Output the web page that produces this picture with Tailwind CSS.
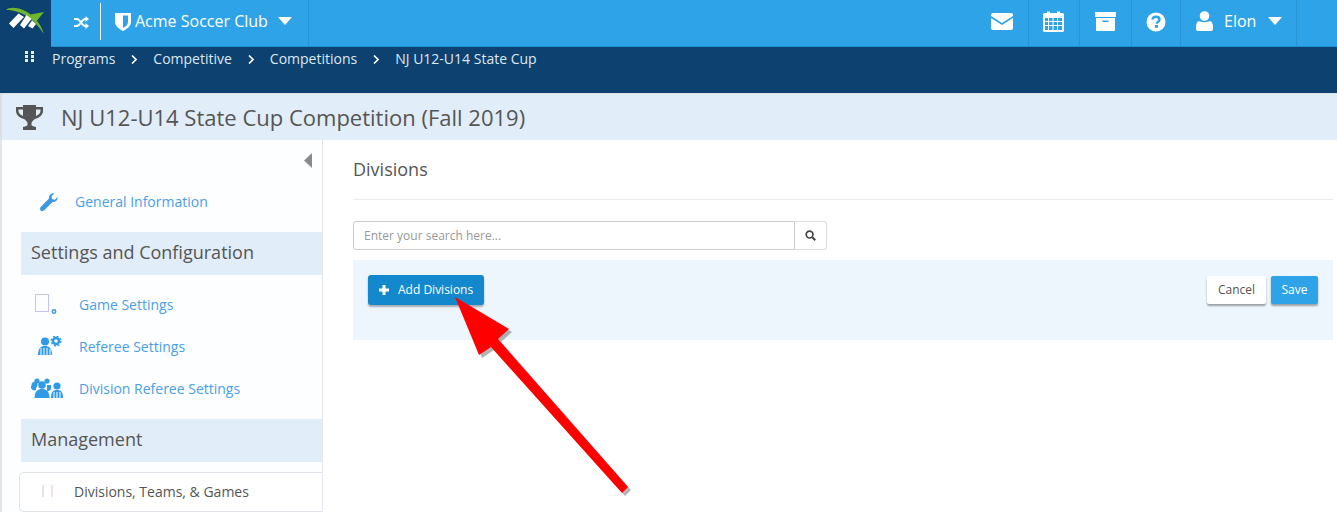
<!DOCTYPE html>
<html>
<head>
<meta charset="utf-8">
<script src="https://cdn.jsdelivr.net/npm/@tailwindcss/browser@4"></script>
</head>
<body class="bg-white overflow-hidden font-['Open_Sans',sans-serif]">
<div class="relative w-[1337px] h-[512px] overflow-hidden bg-white">
  <!-- top bar -->
  <header class="flex h-[47px] bg-[#2ea3e8] border-b border-[#1f8fd3] text-white">
    <div class="w-[51px] h-[47px] bg-[#0d416f] shrink-0">
      <svg width="51" height="47" viewBox="0 0 51 47">
        <path d="M6 10 C9 7 16 7 23 10 C33 14 41 24 44 34 C38 25 30 17 22 13.500 C15 10.500 10 10 6 10Z" fill="#6fb52e"/>
        <path d="M28 15 L44 12 L35 23 L32 18Z" fill="#6fb52e"/>
        <path d="M9 23.500 L18.500 13.500 L24 17 L13.500 28Z M20 25 L26.500 15 L31.500 19 L24 28.500Z M28 26 L32 20.500 L36 24 L32.500 28.500Z" fill="#fff"/>
      </svg>
    </div>
    <div class="w-[49px] flex items-center justify-center shrink-0 pb-[2px] pl-[11px]">
      <svg width="15" height="13" viewBox="0 0 15 13" fill="none" stroke="#fff" stroke-width="2"><path d="M0 3 H3 C6 3 8 10 11 10 H13 M0 10 H3 C6 10 8 3 11 3 H13"/><path d="M11.500 0 L15 3 L11.500 6Z M11.500 7 L15 10 L11.500 13Z" fill="#fff" stroke="none"/></svg>
    </div>
    <div class="w-px h-[37px] mt-[3px] bg-white shrink-0"></div>
    <div class="w-[208px] border-r border-[#2794d6] flex items-center pl-[14px] pb-[4px] shrink-0">
      <svg width="16" height="19" viewBox="0 0 16 19" class="mr-[4px]"><path fill-rule="evenodd" d="M0 1 H16 V10 C16 14 12 17 8 19 C4 17 0 14 0 10Z M8 3.500 V16 C11 14.500 13 12.500 13 10 V3.500Z" fill="#fff"/></svg>
      <span class="text-[16px] leading-none">Acme Soccer Club</span>
      <svg width="14" height="8" viewBox="0 0 14 8" class="ml-[10px]"><path d="M0 0 H14 L7 8Z" fill="#fff"/></svg>
    </div>
    <div class="flex-1"></div>
    <div class="w-[68px] border-r border-[#2794d6] flex items-center justify-center pl-[15px] pb-[3px]">
      <svg width="22" height="17" viewBox="0 0 22 17"><path d="M2 0 H20 A2 2 0 0 1 22 2 V3 L11 10 L0 3 V2 A2 2 0 0 1 2 0Z M0 5 L11 12 L22 5 V15 A2 2 0 0 1 20 17 H2 A2 2 0 0 1 0 15Z" fill="#fff"/></svg>
    </div>
    <div class="w-[51px] border-r border-[#2794d6] flex items-center justify-center pr-[2px] pb-[4px]">
      <svg width="21" height="21" viewBox="0 0 21 21"><path fill-rule="evenodd" d="M1.500 2 H4 V0.500 H7 V2 H14 V0.500 H17 V2 H19.500 A1.500 1.500 0 0 1 21 3.500 V19.500 A1.500 1.500 0 0 1 19.500 21 H1.500 A1.500 1.500 0 0 1 0 19.500 V3.500 A1.500 1.500 0 0 1 1.500 2Z M2 7 V10 H5 V7Z M6 7 V10 H9.500 V7Z M10.500 7 V10 H14 V7Z M15 7 V10 H19 V7Z M2 11 V14 H5 V11Z M6 11 V14 H9.500 V11Z M10.500 11 V14 H14 V11Z M15 11 V14 H19 V11Z M2 15 V19 H5 V15Z M6 15 V19 H9.500 V15Z M10.500 15 V19 H14 V15Z M15 15 V19 H19 V15Z" fill="#fff"/></svg>
    </div>
    <div class="w-[52px] border-r border-[#2794d6] flex items-center justify-center pb-[4px]">
      <svg width="21" height="19" viewBox="0 0 21 19"><path fill-rule="evenodd" d="M0 0 H21 V5 H0Z M1 6 H20 V18 A1 1 0 0 1 19 19 H2 A1 1 0 0 1 1 18Z M7.500 8.500 V10 H13.500 V8.500Z" fill="#fff"/></svg>
    </div>
    <div class="w-[49px] border-r border-[#2794d6] flex items-center justify-center pb-[3px]">
      <svg width="20" height="20" viewBox="0 0 20 20"><circle cx="10" cy="10" r="9.500" fill="#fff"/><path d="M6.500 7.500 C6.700 5.500 8.300 4.700 10 4.700 C12 4.700 13.500 5.900 13.500 7.600 C13.500 9.800 10.800 9.800 10.800 11.800" fill="none" stroke="#2ea3e8" stroke-width="2.400"/><rect x="9" y="13" width="3" height="2.800" fill="#2ea3e8"/></svg>
    </div>
    <div class="w-[116px] border-r border-[#2794d6] flex items-center pl-[15px] pb-[4px]">
      <svg width="17" height="20" viewBox="0 0 17 20"><circle cx="8.500" cy="5" r="4.800" fill="#fff"/><path d="M3 10 C5 11.500 12 11.500 14 10 C16 10.500 17 13 17 16 V18 A2 2 0 0 1 15 20 H2 A2 2 0 0 1 0 18 V16 C0 13 1 10.500 3 10Z" fill="#fff"/></svg>
      <span class="text-[16px] leading-none ml-[11px]">Elon</span>
      <svg width="14" height="8" viewBox="0 0 14 8" class="ml-[12px]"><path d="M0 0 H14 L7 8Z" fill="#fff"/></svg>
    </div>
    <div class="w-[40px]"></div>
  </header>

  <!-- breadcrumb -->
  <nav class="h-[46px] bg-[#0d416f] flex items-start pt-[3px] pl-[25px] text-[14px] leading-[18px] text-[#dce8f2]">
    <svg width="10" height="11" viewBox="0 0 10 11" class="mt-[1px] mr-[17px]" fill="#e6eef5"><rect x="0" y="0" width="3" height="3"/><rect x="6" y="0" width="3" height="3"/><rect x="0" y="4" width="3" height="3"/><rect x="6" y="4" width="3" height="3"/><rect x="0" y="8" width="3" height="3"/><rect x="6" y="8" width="3" height="3"/></svg>
    <span>Programs</span>
    <svg width="6" height="9" viewBox="0 0 6 9" class="mx-[16px] mt-[5px]" fill="none" stroke="#fff" stroke-width="1.600"><path d="M1 0.500 L5 4.500 L1 8.500"/></svg>
    <span>Competitive</span>
    <svg width="6" height="9" viewBox="0 0 6 9" class="mx-[16px] mt-[5px]" fill="none" stroke="#fff" stroke-width="1.600"><path d="M1 0.500 L5 4.500 L1 8.500"/></svg>
    <span>Competitions</span>
    <svg width="6" height="9" viewBox="0 0 6 9" class="mx-[16px] mt-[5px]" fill="none" stroke="#fff" stroke-width="1.600"><path d="M1 0.500 L5 4.500 L1 8.500"/></svg>
    <span>NJ U12-U14 State Cup</span>
  </nav>

  <!-- title bar -->
  <div class="h-[47px] bg-[#e1edf8] border-t border-l-2 border-[#dcdfe2] border-r-0 border-b-0 flex items-center pl-[14px]">
    <svg width="27" height="25" viewBox="0 0 27 25" class="mt-[1px]"><path fill-rule="evenodd" d="M7 0 H20 V2 H27 V6 C27 10 23 13 19 14 C17 15.500 15.500 17 15.500 18 V20 C15.500 21 17 21 20 22 V25 H7 V22 C10 21 11.500 21 11.500 20 V18 C11.500 17 10 15.500 8 14 C4 13 0 10 0 6 V2 H7Z M2.500 4.500 V6 C2.500 8 4.500 10 7 11 C7 9 7 6 7 4.500Z M24.500 4.500 H20 C20 6 20 9 20 11 C22.500 10 24.500 8 24.500 6Z" fill="#555"/></svg>
    <h1 class="ml-[18px] text-[22px] leading-none text-[#555]">NJ U12-U14 State Cup Competition (Fall 2019)</h1>
  </div>

  <div class="flex h-[372px]">
    <!-- sidebar -->
    <aside class="relative w-[323px] shrink-0 bg-[#fdfeff] border-l-2 border-r border-[#e2e6ea] pl-[19px] flex flex-col">
      <svg width="8" height="15" viewBox="0 0 8 15" class="absolute top-[13px] left-[302px]"><path d="M8 0 V15 L0 7.500Z" fill="#8a8a8a"/></svg>
      <div class="h-[92px] flex items-end pb-[21px] text-[14px] leading-[18px] text-[#4a9fe6]">
        <svg width="18" height="18" viewBox="0 0 18 18" class="ml-[19px]"><path d="M17.500 4 C18 7 15.500 9.500 12.500 9 L4 17.500 C3 18.300 1.500 18.300 .7 17.500 C-.2 16.500 -.2 15 .7 14 L9 5.500 C8.500 2.500 11 0 14.500 .3 L11.500 3.300 L12 6 L14.800 6.700Z" fill="#3e97e3"/></svg>
        <span class="ml-[17px]">General Information</span>
      </div>
      <div class="h-[43px] bg-[#e1edf8] pl-[10px] pb-[2px] flex items-center text-[18px] text-[#555]">Settings and Configuration</div>
      <div class="h-[144px] flex flex-col text-[14px] text-[#4a9fe6] relative">
        <div class="h-[42px] mt-[8px] flex items-center">
          <svg width="26" height="22" viewBox="0 0 26 22" class="ml-[13px]"><rect x="1.500" y="1.500" width="13" height="17" fill="none" stroke="#c4c4f0" stroke-width="1"/><circle cx="20" cy="18.500" r="1.700" fill="none" stroke="#3e97e3" stroke-width="1.500"/></svg>
          <span class="ml-[19px]">Game Settings</span>
        </div>
        <div class="h-[42px] flex items-center">
          <svg width="27" height="20" viewBox="0 0 27 20" class="ml-[15px]"><circle cx="9" cy="5.500" r="4" fill="#2f9ae6"/><path d="M2 19 C2 12 5 10 9 10 C13 10 16 12 16 19Z" fill="#2f9ae6"/><path d="M5 12 V19 M8 12 V19 M11 12 V19 M14 13 V19" stroke="#fff" stroke-width="1"/><circle cx="20" cy="5" r="3" fill="none" stroke="#2f9ae6" stroke-width="2.400"/><circle cx="20" cy="5" r="4.800" fill="none" stroke="#2f9ae6" stroke-width="1.400" stroke-dasharray="2 1.770"/></svg>
          <span class="ml-[16px]">Referee Settings</span>
        </div>
        <div class="h-[42px] flex items-center">
          <svg width="33" height="20" viewBox="0 0 33 20" class="ml-[10px]" fill="#2f9ae6"><circle cx="3.500" cy="7" r="3"/><circle cx="6" cy="3" r="2.600"/><circle cx="16" cy="3" r="2.600"/><circle cx="11" cy="7" r="3.800"/><path d="M0 8 H5 V12 C3 13 1 12 0 10Z M16 7 H20 V11 L18 13 H16Z"/><path d="M3.500 20 C3.500 13 7 11 11 11 C15 11 18.500 13 18.500 20Z"/><circle cx="26" cy="8" r="3.600"/><path d="M20 20 C20 14 22 12 26 12 C30 12 32 14 32 20Z"/><path d="M23 14 V20 M26 14 V20 M29 14 V20" stroke="#fff" stroke-width="1"/></svg>
          <span class="ml-[15px]">Division Referee Settings</span>
        </div>
      </div>
      <div class="h-[43px] bg-[#e1edf8] pl-[10px] pb-[2px] flex items-center text-[18px] text-[#555]">Management</div>
      <div class="h-[40px] mt-[10px] -ml-[2px] bg-white border border-r-0 border-[#dfe3e8] rounded-l-[5px] pb-[2px] flex items-center text-[14px] text-[#555]">
        <svg width="14" height="12" viewBox="0 0 14 12" class="ml-[22px]"><path d="M1 0 V12" stroke="#c9c9c9"/><path d="M10 0 V12" stroke="#dbc6c6"/></svg>
        <span class="ml-[18px]">Divisions, Teams, &amp; Games</span>
      </div>
    </aside>

    <!-- main -->
    <main class="flex-1 pl-[30px] pr-[4px]">
      <div class="h-[60px] border-b border-[#e9ecef] flex items-center text-[18px] text-[#555]">Divisions</div>
      <div class="mt-[21px] flex w-[474px] h-[29px]">
        <div class="flex-1 border border-[#ccc] rounded-l-[3px] bg-white pl-[10px] flex items-center text-[12px] text-[#999]">Enter your search here...</div>
        <div class="w-[32px] border border-l-0 border-[#ddd] rounded-r-[3px] flex items-center justify-center">
          <svg width="11" height="11" viewBox="0 0 12 12" fill="none" stroke="#444" stroke-width="1.800"><circle cx="5" cy="5" r="3.700"/><path d="M8 8 L11.200 11.200" stroke-width="2.200"/></svg>
        </div>
      </div>
      <div class="mt-[10px] h-[80px] bg-[#edf6fd] flex items-start justify-between pt-[15px] px-[15px]">
        <button class="h-[30px] w-[116px] bg-[#1488cc] rounded-[3px] shadow-[0_2px_2px_rgba(0,0,0,0.3)] text-white text-[12px] flex items-center pl-[11px]">
          <svg width="10" height="10" viewBox="0 0 10 10"><path d="M3.500 0 H6.500 V3.500 H10 V6.500 H6.500 V10 H3.500 V6.500 H0 V3.500 H3.500Z" fill="#fff"/></svg>
          <span class="ml-[9px]">Add Divisions</span>
        </button>
        <div class="flex gap-[5px] mt-[1px]">
          <button class="h-[28px] w-[59px] bg-white rounded-[2px] shadow-[0_2px_2px_rgba(0,0,0,0.35)] text-[#555] text-[12px]">Cancel</button>
          <button class="h-[28px] w-[47px] bg-[#2ea3e8] rounded-[2px] shadow-[0_2px_2px_rgba(0,0,0,0.35)] text-white text-[12px]">Save</button>
        </div>
      </div>
    </main>
  </div>

  <!-- annotation arrow -->
  <svg class="absolute top-0 left-0 pointer-events-none" width="1337" height="512" viewBox="0 0 1337 512">
    <path d="M455 297 L509 329 L498 339 L628 487 L622 493 L491 347 L479 355Z" fill="#777" opacity="0.55" transform="translate(3 3)"/>
    <path d="M455 297 L509 329 L498 339 L628 487 L622 493 L491 347 L479 355Z" fill="#ff0000"/>
  </svg>
</div>
</body>
</html>
